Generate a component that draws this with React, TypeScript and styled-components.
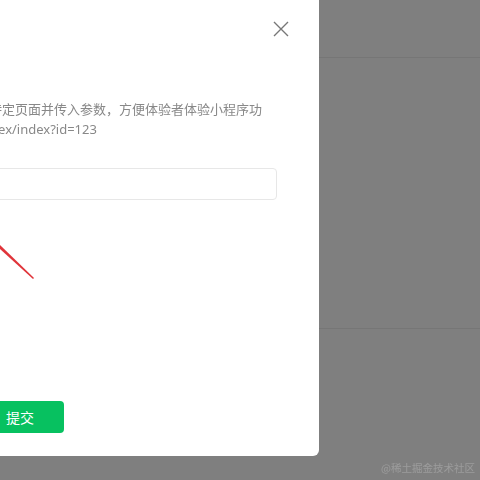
import React from 'react';
import styled, { createGlobalStyle } from 'styled-components';

const GlobalStyle = createGlobalStyle`
  html, body {
    margin: 0;
    padding: 0;
    width: 480px;
    height: 480px;
    overflow: hidden;
    background: #ffffff;
    font-family: "Noto Sans", "Noto Sans CJK SC", sans-serif;
  }
`;

// page behind the mask
const Page = styled.div`
  width: 480px;
  height: 480px;
  display: flex;
  flex-direction: column;
`;

const TopBar = styled.div`
  height: 57px;
  border-bottom: 1px solid #ececec;
`;

const Panel = styled.div`
  height: 270px;
  border-bottom: 1px solid #ececec;
`;

const Mask = styled.div`
  position: fixed;
  inset: 0;
  background: rgba(0, 0, 0, 0.5);
  overflow: hidden;
  display: flex;
  align-items: flex-start;
`;

const Dialog = styled.div`
  flex: none;
  margin: -10px 0 0 -200px;
  width: 519px;
  height: 466px;
  background: #ffffff;
  border-radius: 6px;
  display: flex;
  flex-direction: column;
`;

const Header = styled.div`
  height: 78px;
  padding-right: 30px;
  display: flex;
  align-items: center;
  justify-content: flex-end;
`;

const CloseButton = styled.button`
  border: none;
  background: none;
  padding: 0;
  width: 16px;
  height: 16px;
  display: flex;
  cursor: pointer;
`;

const Body = styled.div`
  padding: 31px 42px 0 59px;
  display: flex;
  flex-direction: column;
`;

const Description = styled.div`
  font-size: 13px;
  line-height: 20px;
  color: #888888;
  white-space: nowrap;
`;

const Input = styled.input`
  box-sizing: border-box;
  margin-top: 29px;
  height: 32px;
  width: 100%;
  border: 1px solid #e7e7e7;
  border-radius: 4px;
  outline: none;
  padding: 0 12px;
  font-size: 13px;
  font-family: inherit;
`;

const Mark = styled.svg`
  display: block;
  margin: 45px 0 0 141px;
`;

const Footer = styled.div`
  margin-top: auto;
  padding: 0 0 23px 176px;
  display: flex;
`;

const SubmitButton = styled.button`
  width: 88px;
  height: 32px;
  border: none;
  border-radius: 4px;
  background: #07c160;
  color: #ffffff;
  font-size: 14px;
  font-family: "Noto Sans CJK SC", sans-serif;
  cursor: pointer;
`;

const Watermark = styled.div`
  position: absolute;
  right: 5px;
  bottom: 5px;
  font-size: 10.5px;
  line-height: 14px;
  color: rgba(255, 255, 255, 0.22);
  font-family: "Noto Sans CJK SC", sans-serif;
`;

function App() {
  return (
    <>
      <GlobalStyle />
      <Page>
        <TopBar />
        <Panel />
      </Page>
      <Mask>
        <Dialog>
          <Header>
            <CloseButton aria-label="关闭">
              <svg width="16" height="16" viewBox="0 0 16 16">
                <path d="M1 1L15 15M15 1L1 15" stroke="#777" strokeWidth="1.4" fill="none" />
              </svg>
            </CloseButton>
          </Header>
          <Body>
            <Description>
              路径可以打开小程序的特定页面并传入参数，方便体验者体验小程序功
              <br />
              能。路径如：pages/index/index?id=123
            </Description>
            <Input />
            <Mark width="36" height="36" viewBox="0 0 36 36">
              <polygon points="0,0 0,4 33,34 34,33" fill="#e0343a" />
            </Mark>
          </Body>
          <Footer>
            <SubmitButton>提交</SubmitButton>
          </Footer>
        </Dialog>
        <Watermark>@稀土掘金技术社区</Watermark>
      </Mask>
    </>
  );
}

export default App;
